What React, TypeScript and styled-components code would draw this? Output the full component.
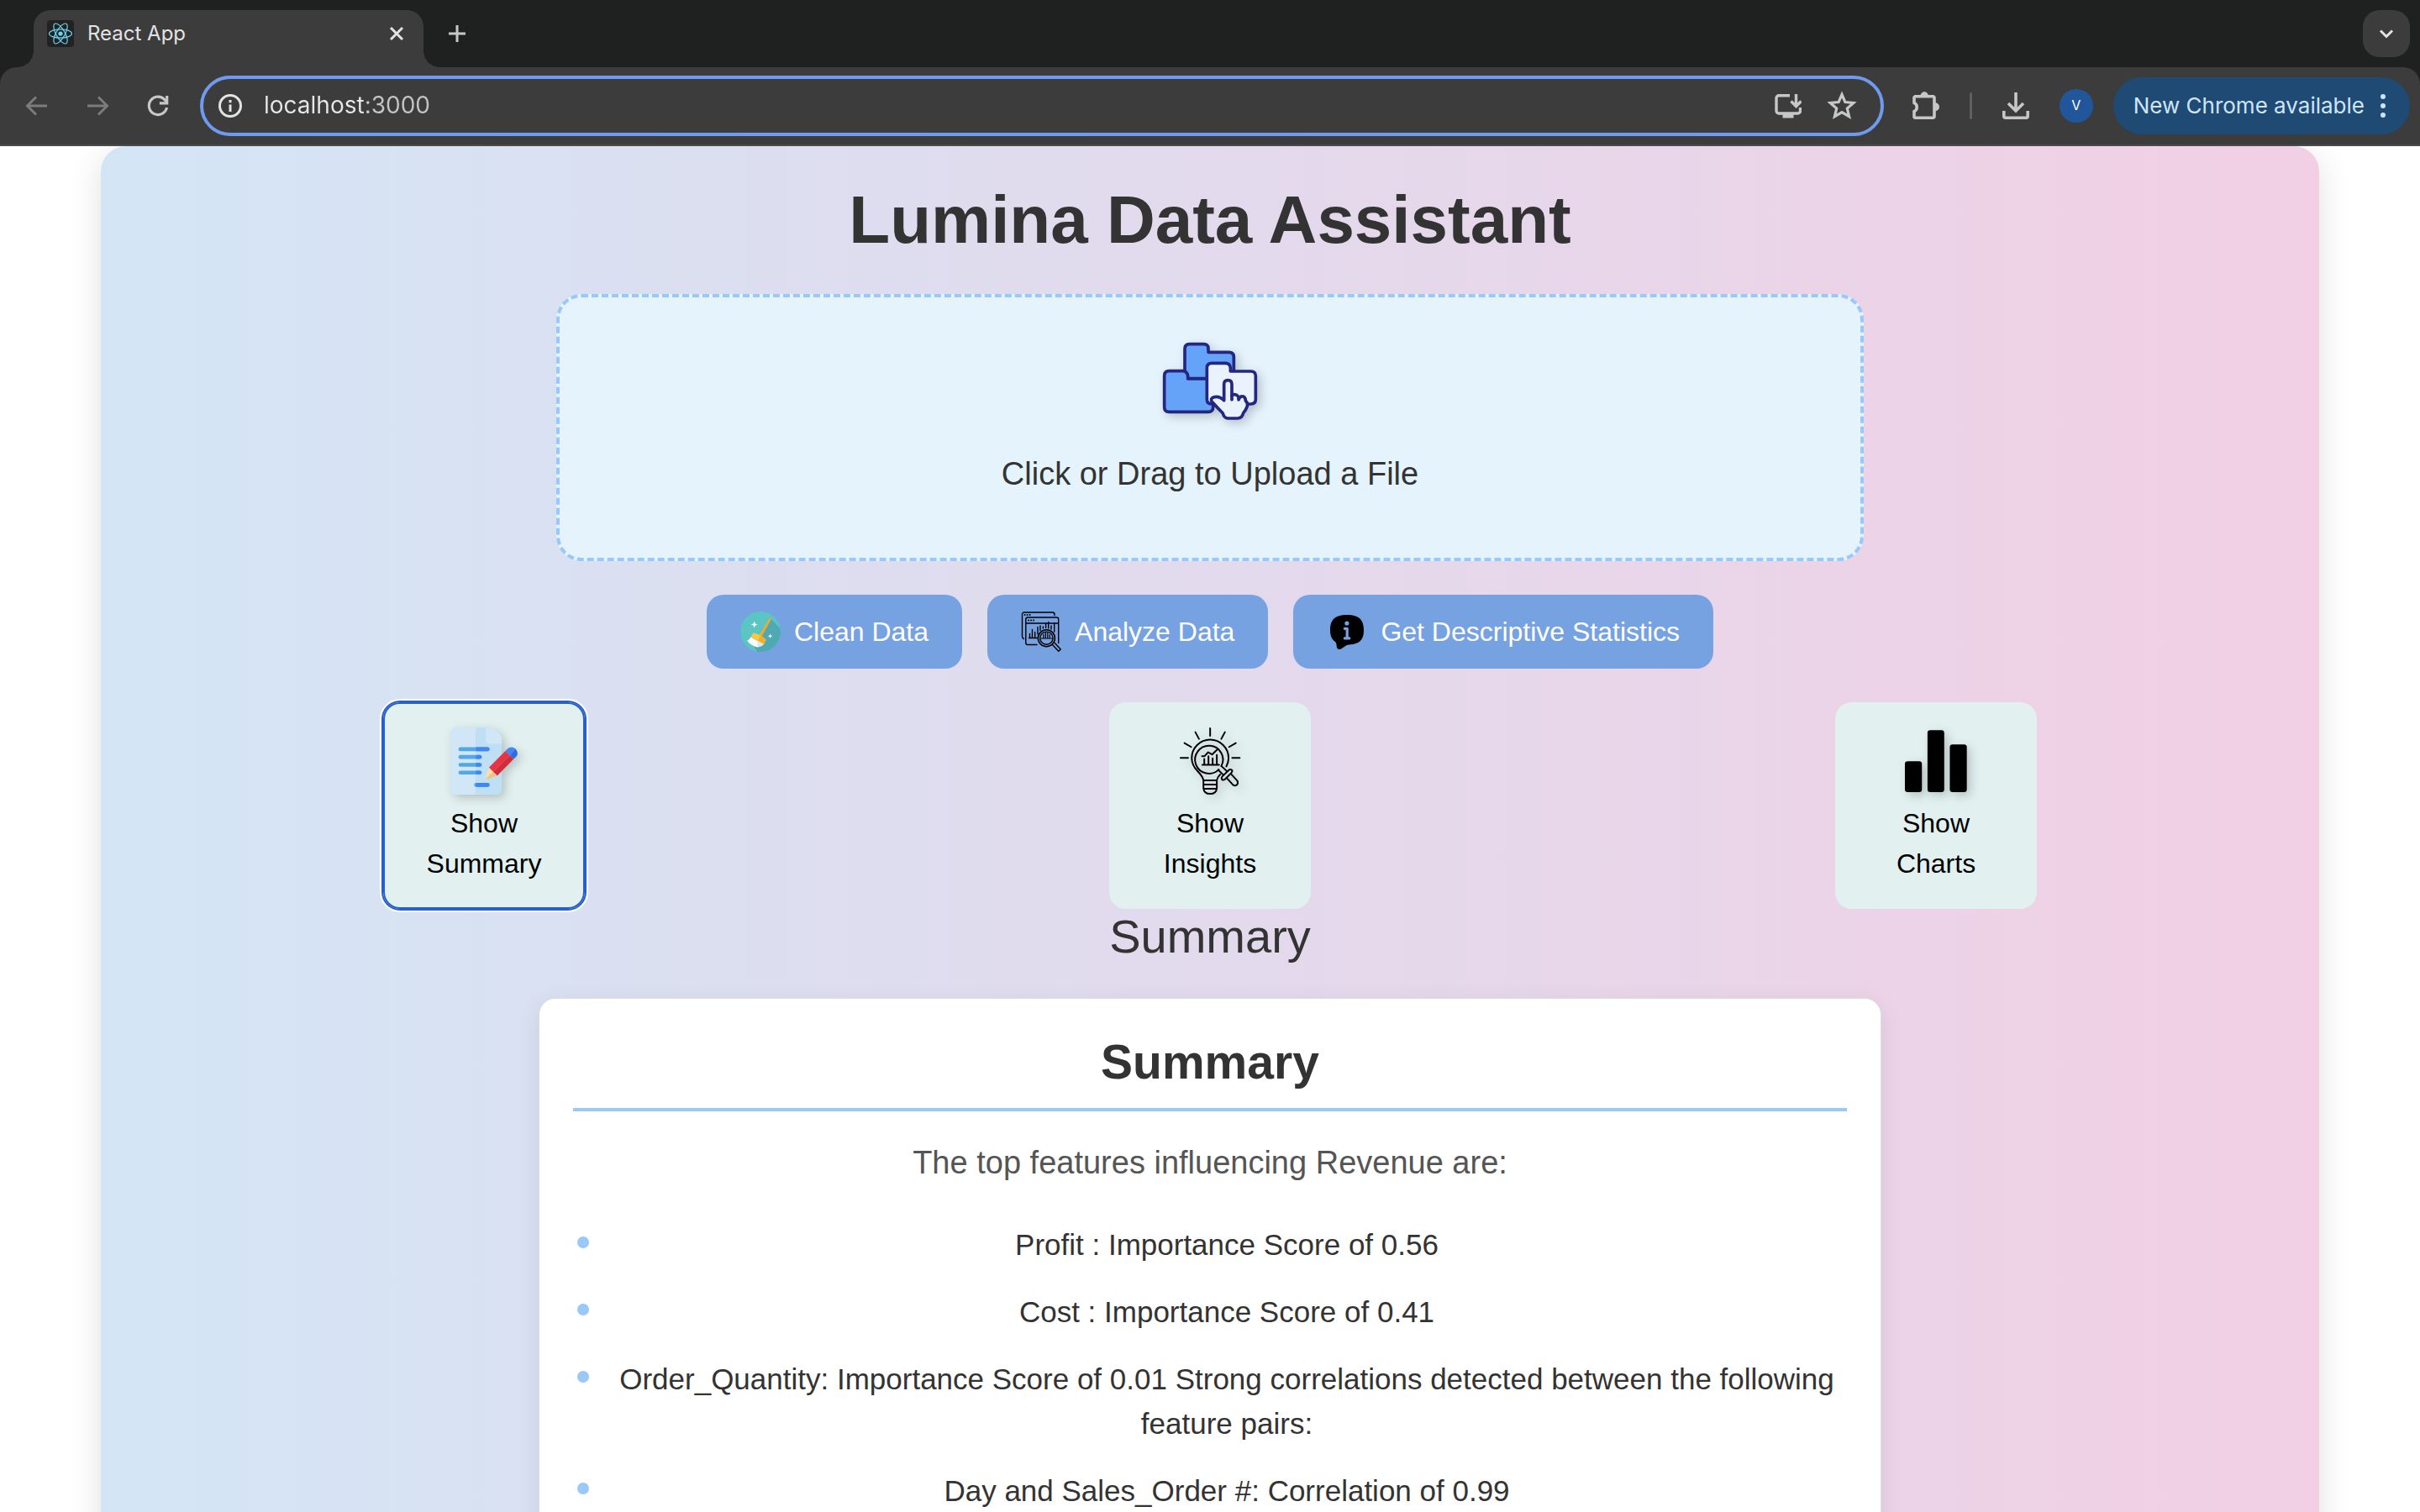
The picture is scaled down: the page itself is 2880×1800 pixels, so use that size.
import React, { useState } from "react";
import styled, { createGlobalStyle, css } from "styled-components";

const GlobalStyle = createGlobalStyle`
  *, *::before, *::after { box-sizing: border-box; }
  html, body { margin: 0; padding: 0; }
  body {
    background: #ffffff;
    color: #333333;
    font-family: "Liberation Sans", Arial, Helvetica, sans-serif;
    font-size: 32px;
    line-height: 1.2;
  }
  button, input { font: inherit; }
  h1, h2, h3, p, ul { margin: 0; padding: 0; }
`;

/* ---------- browser window ---------- */

const Window = styled.div`
  display: flex;
  flex-direction: column;
  height: 100vh;
  overflow: hidden;
`;

const Chrome = styled.header`
  flex: none;
  background: #1f2120;
  font-family: Inter, Roboto, sans-serif;
  color: #e3e3e3;
`;

const TabStrip = styled.div`
  display: flex;
  align-items: center;
  height: 80px;
  padding: 0 12px 0 40px;
`;

const Tab = styled.div`
  position: relative;
  align-self: flex-end;
  display: flex;
  align-items: center;
  width: 464px;
  height: 68px;
  padding: 0 16px 12px 16px;
  border-radius: 20px 20px 0 0;
  background: #3c3c3c;
  font-size: 24px;

  &::before,
  &::after {
    content: "";
    position: absolute;
    bottom: 0;
    width: 20px;
    height: 20px;
  }
  &::before {
    right: 100%;
    background: radial-gradient(circle at 0 0, transparent 20px, #3c3c3c 20px);
  }
  &::after {
    left: 100%;
    background: radial-gradient(circle at 100% 0, transparent 20px, #3c3c3c 20px);
  }
`;

const TabTitle = styled.span`
  flex: 1;
  padding-left: 16px;
`;

const IconButton = styled.button<{ $dim?: boolean; $size?: number }>`
  display: flex;
  align-items: center;
  justify-content: center;
  flex: none;
  width: ${(p) => p.$size ?? 32}px;
  height: ${(p) => p.$size ?? 32}px;
  padding: 0;
  border: 0;
  background: none;
  color: ${(p) => (p.$dim ? "#7c7c7c" : "#c7c7c7")};

  svg {
    flex: none;
  }
`;

const NewTabButton = styled(IconButton)`
  margin-left: 24px;
`;

const TabSearchButton = styled(IconButton)`
  margin-left: auto;
  border-radius: 20px;
  background: #3c3c3c;
  color: #e3e3e3;
`;

const Toolbar = styled.div`
  display: flex;
  align-items: center;
  height: 94px;
  padding: 0 12px 0 28px;
  border-bottom: 2px solid #4a4a4c;
  border-radius: 20px 20px 0 0;
  background: #3c3c3c;
`;

const NavButtons = styled.nav`
  display: flex;
  gap: 40px;
`;

const AddressBar = styled.div`
  display: flex;
  align-items: center;
  flex: 1;
  height: 72px;
  margin: 0 32px 0 34px;
  padding: 0 30px 0 16px;
  gap: 32px;
  border: 4px solid #6f9af0;
  border-radius: 36px;
`;

const UrlInput = styled.input`
  flex: 1;
  min-width: 0;
  padding: 0;
  margin-left: -8px;
  border: 0;
  outline: 0;
  background: linear-gradient(to right, #e8e8e8 122px, #c4c4c4 122px);
  background-clip: text;
  -webkit-text-fill-color: transparent;
  color: #e8e8e8;
  font-size: 28px;
`;

const ToolbarActions = styled.div`
  display: flex;
  align-items: center;
`;

const Divider = styled.span`
  width: 3px;
  height: 32px;
  margin: 0 36px 0 34px;
  border-radius: 2px;
  background: #606060;
`;

const Avatar = styled.button`
  width: 40px;
  height: 40px;
  margin: 0 24px 0 36px;
  padding: 0;
  border: 0;
  border-radius: 50%;
  background: #21569b;
  color: #ffffff;
  font-size: 16px;
`;

const UpdateButton = styled.button`
  display: flex;
  align-items: center;
  gap: 18px;
  height: 68px;
  padding: 0 28px 0 24px;
  border: 0;
  border-radius: 34px;
  background: #1f4a73;
  color: #cde5ff;
  font-size: 26px;
  white-space: nowrap;
`;

/* ---------- page ---------- */

const Page = styled.main`
  flex: 1;
  min-height: 0;
  overflow: hidden;
  padding: 0 120px;
`;

const Container = styled.div`
  display: flex;
  flex-direction: column;
  align-items: center;
  min-height: 130vh;
  padding: 40px 24px;
  border-radius: 30px;
  background: linear-gradient(to right, #d3e5f5, #f2cfe4);
  box-shadow: 0 8px 40px rgba(0, 0, 0, 0.12);
  text-align: center;
`;

const Title = styled.h1`
  font-size: 80px;
  line-height: 96px;
`;

const UploadArea = styled.label`
  display: flex;
  flex-direction: column;
  align-items: center;
  gap: 20px;
  width: 60%;
  margin-top: 40px;
  padding: 40px 40px 69px;
  border: 4px dashed #9ac8f8;
  border-radius: 30px;
  background: #e5f3fd;
  font-size: 38px;
  line-height: 61px;
  cursor: pointer;
`;

const FileInput = styled.input`
  position: absolute;
  width: 1px;
  height: 1px;
  opacity: 0;
`;

const softShadow = css`
  filter: drop-shadow(4px 4px 6px rgba(0, 0, 0, 0.2));
`;

const ShadedSvg = styled.svg`
  flex: none;
  ${softShadow}
`;

const ActionRow = styled.div`
  display: flex;
  justify-content: center;
  gap: 30px;
  margin: 40px 0;
`;

const ActionButton = styled.button`
  display: flex;
  align-items: center;
  gap: 16px;
  padding: 20px 40px;
  border: 0;
  border-radius: 20px;
  background: #76a2e1;
  color: #ffffff;
  font-size: 32px;
  cursor: pointer;
`;

const ViewRow = styled.div`
  display: flex;
  justify-content: space-around;
  align-self: stretch;
`;

const ViewCard = styled.button<{ $active: boolean }>`
  display: flex;
  flex-direction: column;
  align-items: center;
  gap: 10px;
  width: 240px;
  padding: 30px 40px;
  border: 0;
  border-radius: 20px;
  outline: 0;
  background: #e2f1f0;
  color: #000000;
  font-size: 32px;
  line-height: 48px;
  cursor: pointer;
  ${(p) =>
    p.$active &&
    css`
      box-shadow: inset 0 0 0 2px #285fc9, 0 0 0 2px #285fc9, 0 0 0 4px #ffffff;
    `}
`;

const SectionTitle = styled.h2`
  font-size: 56px;
  font-weight: 400;
  line-height: 66px;
`;

const SummaryCard = styled.section`
  width: 1598px;
  max-width: 100%;
  margin-top: 40px;
  padding: 40px;
  border: 1px solid #dddddd;
  border-radius: 20px;
  background: #ffffff;
  box-shadow: 0 8px 30px rgba(0, 0, 0, 0.08);
`;

const SummaryHeading = styled.h3`
  padding-bottom: 20px;
  border-bottom: 4px solid #9ac8f8;
  font-size: 57px;
  line-height: 70px;
`;

const Intro = styled.p`
  margin: 31px 0 40px;
  color: #555555;
  font-size: 38px;
  line-height: 61px;
`;

const FeatureList = styled.ul`
  display: flex;
  flex-direction: column;
  gap: 27px;
  list-style: none;
`;

const Feature = styled.li`
  display: flex;
  gap: 21px;
  padding-left: 5px;
  font-size: 35px;
  line-height: 53px;

  &::before {
    content: "";
    flex: none;
    width: 14px;
    height: 14px;
    margin-top: 17px;
    border-radius: 50%;
    background: #9ac8f8;
  }
`;

const FeatureText = styled.span`
  flex: 1;
`;

/* ---------- browser icons ---------- */

const ReactLogo = () => (
  <svg width="32" height="32" viewBox="0 0 32 32" fill="none" stroke="#6fd3f2" strokeWidth="1.2">
    <rect width="32" height="32" rx="4" fill="#222222" stroke="none" />
    <circle cx="16" cy="16" r="2.6" fill="#6fd3f2" stroke="none" />
    <ellipse cx="16" cy="16" rx="13.5" ry="5.2" />
    <ellipse cx="16" cy="16" rx="13.5" ry="5.2" transform="rotate(60 16 16)" />
    <ellipse cx="16" cy="16" rx="13.5" ry="5.2" transform="rotate(120 16 16)" />
  </svg>
);

const CloseIcon = () => (
  <svg width="32" height="32" viewBox="0 0 32 32" stroke="#e3e3e3" strokeWidth="3">
    <path d="M9 9l14 14M23 9L9 23" />
  </svg>
);

const PlusIcon = () => (
  <svg width="32" height="32" viewBox="0 0 32 32" stroke="currentColor" strokeWidth="3">
    <path d="M16 6v20M6 16h20" />
  </svg>
);

const ChevronIcon = () => (
  <svg width="56" height="56" viewBox="0 0 56 56" fill="none" stroke="currentColor" strokeWidth="3">
    <path d="M21 24.500l7 7 7-7" />
  </svg>
);

const ArrowIcon = ({ flip }: { flip?: boolean }) => (
  <svg width="32" height="32" viewBox="0 0 32 32" fill="none" stroke="currentColor" strokeWidth="3">
    <path d={flip ? "M4 16h23M17 5.500L27.500 16 17 26.500" : "M28 16H5M15 5.500L4.500 16 15 26.500"} />
  </svg>
);

const ReloadIcon = () => (
  <svg width="32" height="32" viewBox="0 0 32 32" fill="none" stroke="currentColor" strokeWidth="3.2">
    <path d="M26.500 18A10.700 10.700 0 1 1 24 8.700l2 2.300" />
    <path d="M28.300 4v10.500H17.800v-3.200h7.300V4z" fill="currentColor" stroke="none" />
  </svg>
);

const InfoIcon = () => (
  <svg width="32" height="32" viewBox="0 0 32 32" fill="none" stroke="#e3e3e3" strokeWidth="3">
    <circle cx="16" cy="16" r="12.500" />
    <path d="M16 14.500V23M16 9v3.200" />
  </svg>
);

const InstallIcon = () => (
  <svg width="32" height="32" viewBox="0 0 32 32" fill="none" stroke="currentColor" strokeWidth="3.4">
    <path d="M18 3.700H5a3 3 0 0 0-3 3V22a3 3 0 0 0 3 3h22.500a3 3 0 0 0 3-3v-4" />
    <path d="M25.500 2v14M19.500 10.500l6 6 6-6" />
    <path d="M9.500 25h13v5.500h-13z" fill="currentColor" stroke="none" />
  </svg>
);

const StarIcon = () => (
  <svg width="36" height="36" viewBox="0 0 36 36" fill="none" stroke="currentColor" strokeWidth="3.2">
    <path d="M18 4.500l3.900 9.100 9.900.9-7.500 6.500 2.300 9.600-8.600-5.100-8.600 5.100 2.300-9.600-7.500-6.500 9.900-.9z" />
  </svg>
);

const ExtensionIcon = () => (
  <svg width="36" height="36" viewBox="0 0 36 36" fill="none" stroke="currentColor" strokeWidth="3.6">
    <path d="M5.500 6.800h21a1.500 1.500 0 0 1 1.500 1.500v22.400a1.500 1.500 0 0 1-1.500 1.500H5.500A1.500 1.500 0 0 1 4 30.700v-6a5.800 5.800 0 0 0 0-10.400v-6A1.500 1.500 0 0 1 5.500 6.800z" />
    <path d="M11.500 6a4.700 4.700 0 0 1 9.400 0zM29 14.200a5 5 0 0 1 0 10z" fill="currentColor" stroke="none" />
  </svg>
);

const DownloadIcon = () => (
  <svg width="32" height="32" viewBox="0 0 32 32" fill="none" stroke="currentColor" strokeWidth="3.600">
    <path d="M16 0v21M7 13l9 9 9-9" />
    <path d="M1.800 22v6.200a2 2 0 0 0 2 2h24.400a2 2 0 0 0 2-2V22" />
  </svg>
);

const DotsIcon = () => (
  <svg width="8" height="32" viewBox="0 0 8 32" fill="currentColor">
    <circle cx="4" cy="5" r="3" />
    <circle cx="4" cy="16" r="3" />
    <circle cx="4" cy="27" r="3" />
  </svg>
);

/* ---------- page icons ---------- */

const FoldersIcon = () => (
  <ShadedSvg width="120" height="120" viewBox="120 42 360 360" stroke="#23277f" strokeWidth="11" strokeLinejoin="round" strokeLinecap="round">
    <path fill="#64a3f8" d="M210 212V106Q210 89 227 89H278Q293 89 294 104V118H368Q385 118 385 135V212Z" />
    <path fill="#64a3f8" d="M154 185H203Q218 186 221 202V213H311V314Q311 331 294 331H154Q137 331 137 314V202Q137 185 154 185Z" />
    <path fill="#e9f2fd" d="M306 157H355Q371 157 373 173V186H446Q463 186 463 203V286Q463 303 446 303H306Q289 303 289 286V174Q289 157 306 157Z" />
    <path
      fill="#e9f2fd"
      d="M350 290V232Q350 218 364 218Q378 218 378 232V272Q389 265 399 274Q404 278 404 284Q408 273 419 276Q427 279 427 292Q436 298 433 311Q429 323 419 335Q415 354 398 354H363Q349 352 346 336Q325 315 307 295Q300 284 312 279Q332 272 350 290Z"
    />
    <path fill="none" d="M378 272V287M402 282V288" />
  </ShadedSvg>
);

const BroomIcon = () => (
  <svg width="48" height="48" viewBox="0 0 48 48">
    <circle cx="24" cy="24" r="24" fill="#5bc5c3" />
    <path fill="#4fa9b3" d="M36.500 8.500L47.700 20.500A24 24 0 0 1 20 47.700L16.500 42 9 35 24 28z" />
    <path fill="#f0a92e" d="M34.600 8.300q1.600-1.300 2.400.6l-12 21.600-3-1.700z" />
    <path fill="#fbc839" d="M15.600 25.200q5.400 1.600 8.400 3.300 4 2.200 6.700 5.200l-2.700 5.300-15.500-8.700z" />
    <path fill="#f0b02e" d="M24 28.500q4 2.200 6.700 5.200L28 39l-7-4z" />
    <path fill="#ffffff" d="M12.200 30.400L28 39q-2.600 3-7.500 3.600Q13 41 8.200 34.800q3-1.300 4-4.400z" />
    <path fill="#dfe5ea" d="M20.500 34.900L28 39q-2.600 3-7.500 3.600z" />
    <path fill="#ffffff" d="M16.700 11.500l1.100 2.900 2.900 1.100-2.900 1.100-1.100 2.900-1.100-2.900-2.900-1.100 2.900-1.100zM35.600 26.500l.8 2 2 .8-2 .8-.8 2-.8-2-2-.8 2-.8z" />
  </svg>
);

const AnalyzeIcon = () => (
  <svg width="48" height="48" viewBox="0 0 48 48" fill="none" stroke="#000000" strokeWidth="1.400" strokeLinecap="round">
    <path d="M3.500 32.500Q1.500 32 1.500 29.500V3.500Q1.500 1 4 1h33.500Q40 1 40 3.500v1" />
    <path d="M19 39.500H8Q5.800 39.500 5.800 37.300V9.300Q5.800 7 8 7h34.500Q44.700 7 44.700 9.300V37.500M6 14h38.500" />
    <path d="M4.500 4h.2M7.500 4h.2M10.500 4h.2M9 10.500h.2M12 10.500h.2M15 10.500h.2" strokeWidth="1.800" />
    <path d="M9.500 31.500H20M10.500 31v-4.500M13.500 31v-9.500M16.700 31v-6.500M20 27v-8.500M23 22.500V17M26.400 20v-2M29.600 19.500v-5M32.700 20v-7.500M36 21v-4M39.700 24V14" />
    <path d="M27 31v-4M29.400 31v-6M31.800 31v-5.500M34.200 31v-3.500M24 32h13" strokeWidth="1.200" />
    <circle cx="30.400" cy="31.700" r="10" strokeWidth="1.600" />
    <circle cx="30.400" cy="31.700" r="7.600" />
    <path d="M37.500 39.500l7.300 7.800 2.500-2.300-7-7.500" />
  </svg>
);

const StatsIcon = () => (
  <svg width="48" height="48" viewBox="0 0 48 48">
    <path d="M24 4C37 4 44 8.500 44 22.300 44 35 38 38.500 26.500 39.500 22 40 20 43 16.500 44.700 13.500 45.500 12 44 11.700 41.500 11.500 39 11.500 37.500 10 36 6 33.500 4 29 4 22.300 4 8.500 11 4 24 4z" />
    <circle cx="23.900" cy="14" r="2.600" fill="#76a2e1" />
    <path d="M21.300 20.300h2.900v11.500M21.300 31.800h5.500" fill="none" stroke="#76a2e1" strokeWidth="3.200" strokeLinecap="round" strokeLinejoin="round" />
  </svg>
);

const NoteIcon = () => (
  <ShadedSvg width="80" height="80" viewBox="287 137 241 241">
    <path fill="#d1e7f8" d="M307 137H379V378H307Q287 378 287 358V157Q287 137 307 137Z" />
    <path fill="#bfdff5" d="M379 137H432L471 172V358Q471 378 451 378H379Z" />
    <path fill="#d1e7f8" d="M414 137H430Q440 138 447 145L463 160Q471 168 471 178V195H424Q414 195 414 185Z" />
    <g strokeWidth="14" strokeLinecap="round">
      <path stroke="#51a8e2" d="M323 215H379M323 243H379M323 271H379M323 299H379" />
      <path stroke="#4086f5" d="M386 215H421M386 243H393M386 271H393M386 299H393M386 343H421" />
      <path stroke="#51a8e2" d="M379 343H380" />
    </g>
    <path fill="#4086f5" d="M379 208H421V222H379ZM379 236H393V250H379ZM379 264H393V278H379ZM379 292H393V306H379ZM379 336H421V350H379Z" />
    <path fill="#e93344" d="M484 221L500 237L440 296L425 281Z" />
    <path fill="#cf2d38" d="M500 237L514 250L455 310L440 296Z" />
    <path fill="#4086f5" d="M484 221L492 213Q506 202 520 213L500 237Z" />
    <path fill="#3069e0" d="M500 237L520 213Q534 228 523 242L514 250Z" />
    <path fill="#fbdcae" d="M425 281L440 296L416 320Q412 318 414 312Z" />
    <path fill="#f3c27d" d="M440 296L455 310L424 321Q418 323 416 320Z" />
  </ShadedSvg>
);

const InsightIcon = () => (
  <ShadedSvg width="80" height="80" viewBox="299 137 241 241" fill="none" stroke="#000000" strokeWidth="6" strokeLinecap="round" strokeLinejoin="round">
    <path d="M420 140V167M367 154L380 178M473 154L460 178M328 193L352 207M512 193L488 207M314 246H341M499 246H526" />
    <path d="M396 326Q393 313 377 296Q354 273 354 247A66 66 0 0 1 486 247Q486 262 478 277M444 326Q447 314 456 306" />
    <path d="M460 276A50 50 0 1 0 451 288" />
    <path d="M392 271H452M399 270V250M414 270V240M429 270V248M444 270V236" />
    <path d="M391 240H400L413 226L427 234L445 217" />
    <path d="M396 327H444V354Q442 375 420 375Q398 375 396 354ZM396 342H444M396 357H444" />
    <path d="M461 276L480 294M449 289L466 306" />
    <path d="M488 289Q495 285 499 291Q500 296 496 300L473 323Q467 328 462 323Q459 317 464 312Z" />
    <path d="M497 306L517 328Q522 336 516 343Q508 348 502 343L482 321" />
  </ShadedSvg>
);

const BarsIcon = () => (
  <ShadedSvg width="80" height="80" viewBox="312 137 241 241">
    <rect x="321" y="258" width="61" height="111" rx="10" />
    <rect x="402" y="147" width="60" height="222" rx="10" />
    <rect x="482" y="198" width="61" height="171" rx="10" />
  </ShadedSvg>
);

/* ---------- data ---------- */

const actions = [
  { label: "Clean Data", icon: <BroomIcon /> },
  { label: "Analyze Data", icon: <AnalyzeIcon /> },
  { label: "Get Descriptive Statistics", icon: <StatsIcon /> },
];

const views = [
  { id: "Summary", icon: <NoteIcon /> },
  { id: "Insights", icon: <InsightIcon /> },
  { id: "Charts", icon: <BarsIcon /> },
];

const features = [
  "Profit : Importance Score of 0.56",
  "Cost : Importance Score of 0.41",
  "Order_Quantity: Importance Score of 0.01 Strong correlations detected between the following feature pairs:",
  "Day and Sales_Order #: Correlation of 0.99",
];

const BrowserChrome = () => {
  const [url, setUrl] = useState("localhost:3000");
  return (
    <Chrome>
      <TabStrip>
        <Tab>
          <ReactLogo />
          <TabTitle>React App</TabTitle>
          <IconButton aria-label="Close tab">
            <CloseIcon />
          </IconButton>
        </Tab>
        <NewTabButton aria-label="New tab">
          <PlusIcon />
        </NewTabButton>
        <TabSearchButton $size={56} aria-label="Search tabs">
          <ChevronIcon />
        </TabSearchButton>
      </TabStrip>
      <Toolbar>
        <NavButtons aria-label="History">
          <IconButton $dim aria-label="Back">
            <ArrowIcon />
          </IconButton>
          <IconButton $dim aria-label="Forward">
            <ArrowIcon flip />
          </IconButton>
          <IconButton aria-label="Reload">
            <ReloadIcon />
          </IconButton>
        </NavButtons>
        <AddressBar>
          <IconButton aria-label="Site information">
            <InfoIcon />
          </IconButton>
          <UrlInput aria-label="Address" value={url} onChange={(e) => setUrl(e.target.value)} />
          <IconButton aria-label="Install app">
            <InstallIcon />
          </IconButton>
          <IconButton aria-label="Bookmark">
            <StarIcon />
          </IconButton>
        </AddressBar>
        <ToolbarActions>
          <IconButton $size={36} aria-label="Extensions">
            <ExtensionIcon />
          </IconButton>
          <Divider />
          <IconButton aria-label="Downloads">
            <DownloadIcon />
          </IconButton>
          <Avatar aria-label="Profile">V</Avatar>
          <UpdateButton>
            New Chrome available
            <DotsIcon />
          </UpdateButton>
        </ToolbarActions>
      </Toolbar>
    </Chrome>
  );
};

export default function App() {
  const [view, setView] = useState("Summary");
  return (
    <Window>
      <GlobalStyle />
      <BrowserChrome />
      <Page>
        <Container>
          <Title>Lumina Data Assistant</Title>
          <UploadArea>
            <FileInput type="file" />
            <FoldersIcon />
            Click or Drag to Upload a File
          </UploadArea>
          <ActionRow>
            {actions.map((a) => (
              <ActionButton key={a.label}>
                {a.icon}
                {a.label}
              </ActionButton>
            ))}
          </ActionRow>
          <ViewRow>
            {views.map((v) => (
              <ViewCard key={v.id} $active={v.id === view} onClick={() => setView(v.id)}>
                {v.icon}
                Show {v.id}
              </ViewCard>
            ))}
          </ViewRow>
          <SectionTitle>{view}</SectionTitle>
          <SummaryCard>
            <SummaryHeading>Summary</SummaryHeading>
            <Intro>The top features influencing Revenue are:</Intro>
            <FeatureList>
              {features.map((f) => (
                <Feature key={f}>
                  <FeatureText>{f}</FeatureText>
                </Feature>
              ))}
            </FeatureList>
          </SummaryCard>
        </Container>
      </Page>
    </Window>
  );
}
